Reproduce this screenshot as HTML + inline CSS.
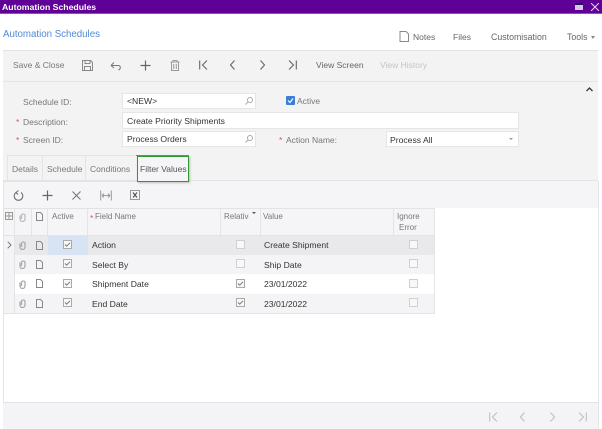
<!DOCTYPE html>
<html><head><meta charset="utf-8">
<style>
html,body{margin:0;padding:0;background:#fff}
#p{position:relative;width:602px;height:429px;overflow:hidden;background:#fff;font-family:"Liberation Sans",sans-serif;font-size:8.5px;color:#555;filter:blur(.3px)}
#p div,#p span,#p svg{position:absolute}
.t{white-space:nowrap;line-height:12px}
.b{background:#fff;border:1px solid #e6e6e6;box-sizing:border-box}
.v{color:#333;font-size:8.6px}
.r{color:#d9534f}
svg{fill:none;stroke:#666;stroke-width:1}
.h{background:#e4e4e6}
</style></head><body><div id="p">
<div style="left:0;top:0;width:602px;height:14px;background:#5f0097;border-bottom:1px solid #8d52b5;box-sizing:border-box"></div>
<span class="t" style="left:2px;top:1px;color:#fff;font-weight:bold;font-size:8.7px">Automation Schedules</span>
<div style="left:575px;top:3px;width:8px;height:7px;background:#d8c4e6;border-top:2px solid #2a1450;box-sizing:border-box"></div>
<svg style="left:591px;top:3px;stroke:#e6d8f0" width="8" height="8"><path d="M0 0L8 8M8 0L0 8"/></svg>

<span class="t" style="left:3px;top:29px;color:#4f8ad8;font-size:9.7px">Automation Schedules</span>
<svg style="left:399px;top:31px" width="10" height="11"><path d="M1 .5H7L9.500 3V10.500H1Z" stroke="#888"/></svg>
<span class="t" style="left:413px;top:31px;color:#666">Notes</span>
<span class="t" style="left:453px;top:31px;color:#666">Files</span>
<span class="t" style="left:491px;top:31px;color:#666;font-size:8.8px">Customisation</span>
<span class="t" style="left:567px;top:31px;color:#666;font-size:8.8px">Tools</span>
<div style="left:591px;top:36px;border-left:2.500px solid transparent;border-right:2.500px solid transparent;border-top:3px solid #888"></div>

<div style="left:3px;top:50px;width:595px;height:31px;background:#f3f3f3;border-top:1px solid #e3e3e3;box-sizing:border-box"></div>
<span class="t" style="left:13px;top:59px;color:#777">Save &amp; Close</span>
<svg style="left:82px;top:60px;stroke:#888" width="11" height="11"><path d="M.5 .5H8.500L10.500 2.500V10.500H.5ZM3 .5V3.500H8V.5M2.500 10.500V6.500H8.500V10.500"/></svg>
<svg style="left:110px;top:60px;stroke:#777" width="12" height="11"><path d="M1 5.500L4 2.500M1 5.500L4 8M1 5.500H8C11 5.500 11 9 8.500 10"/></svg>
<svg style="left:140px;top:60px" width="11" height="11"><path d="M5.500 .5V10.500M.5 5.500H10.500" stroke-width="1.200"/></svg>
<svg style="left:170px;top:60px;stroke:#999" width="10" height="11"><path d="M.5 2H9.500M3 2V.5H7V2M1.500 2V10.500H8.500V2M3.700 4V9M6.300 4V9"/></svg>
<svg style="left:199px;top:60px" width="10" height="10"><path d="M.7 .5V9.500M8 .5L3.500 5L8 9.500" stroke-width="1.100"/></svg>
<svg style="left:229px;top:60px" width="7" height="10"><path d="M5.500 .5L1.500 5L5.500 9.500" stroke-width="1.100"/></svg>
<svg style="left:259px;top:60px" width="7" height="10"><path d="M1.500 .5L5.500 5L1.500 9.500" stroke-width="1.100"/></svg>
<svg style="left:287px;top:60px" width="10" height="10"><path d="M9.300 .5V9.500M2 .5L6.500 5L2 9.500" stroke-width="1.100"/></svg>
<span class="t" style="left:316px;top:59px;color:#666">View Screen</span>
<span class="t" style="left:380px;top:59px;color:#c4c4c4">View History</span>

<div style="left:3px;top:81px;width:595px;height:100px;background:#f3f3f3;border-top:1px solid #e6e6e6;border-bottom:1px solid #e3e3e3;box-sizing:border-box"></div>
<svg style="left:586px;top:87px;stroke:#333" width="7" height="5"><path d="M.5 4L3.500 1L6.500 4" stroke-width="1.300"/></svg>

<span class="t" style="left:23px;top:96px;color:#777">Schedule ID:</span>
<div class="b" style="left:122px;top:93px;width:134px;height:16px"></div>
<span class="t v" style="left:127px;top:95px">&lt;NEW&gt;</span>
<svg style="left:245px;top:97px;stroke:#aaa" width="8" height="8"><circle cx="5" cy="3" r="2.500"/><path d="M3 5L.5 7.500"/></svg>
<div style="left:286px;top:96px;width:9px;height:9px;background:#3a7fd5;border-radius:1px"></div>
<svg style="left:287px;top:97px;stroke:#fff" width="7" height="7"><path d="M1 3.500L3 5.500L6 1.500" stroke-width="1.200"/></svg>
<span class="t" style="left:297px;top:95px;color:#777">Active</span>

<span class="t r" style="left:16px;top:116px">*</span>
<span class="t" style="left:23px;top:116px;color:#777">Description:</span>
<div class="b" style="left:122px;top:112px;width:397px;height:17px"></div>
<span class="t v" style="left:127px;top:115px">Create Priority Shipments</span>

<span class="t r" style="left:16px;top:134px">*</span>
<span class="t" style="left:23px;top:134px;color:#777">Screen ID:</span>
<div class="b" style="left:122px;top:131px;width:134px;height:16px"></div>
<span class="t v" style="left:127px;top:133px">Process Orders</span>
<svg style="left:245px;top:135px;stroke:#aaa" width="8" height="8"><circle cx="5" cy="3" r="2.500"/><path d="M3 5L.5 7.500"/></svg>
<span class="t r" style="left:279px;top:134px">*</span>
<span class="t" style="left:286px;top:134px;color:#777">Action Name:</span>
<div class="b" style="left:386px;top:131px;width:133px;height:16px"></div>
<span class="t v" style="left:390px;top:134px">Process All</span>
<div style="left:509px;top:138px;border-left:2px solid transparent;border-right:2px solid transparent;border-top:2.500px solid #999"></div>

<div class="h" style="left:7px;top:155px;width:1px;height:26px"></div>
<div class="h" style="left:42px;top:155px;width:1px;height:26px"></div>
<div class="h" style="left:85px;top:155px;width:1px;height:26px"></div>
<div class="h" style="left:7px;top:155px;width:130px;height:1px"></div>
<span class="t" style="left:12px;top:163px;color:#777">Details</span>
<span class="t" style="left:47px;top:163px;color:#777">Schedule</span>
<span class="t" style="left:90px;top:163px;color:#777">Conditions</span>

<div style="left:3px;top:181px;width:595px;height:27px;background:#f5f5f7"></div>
<div style="left:3px;top:181px;width:134px;height:1px;background:#e3e3e3"></div>
<div style="left:136px;top:155px;width:53px;height:1px;background:#4a7fd8"></div>
<div style="left:137px;top:156px;width:52px;height:26px;background:#f5f5f7;border:1px solid #2e9a34;box-sizing:border-box;box-shadow:1px 1px 2px #bbb"></div>
<span class="t" style="left:140px;top:163px;color:#555">Filter Values</span>
<svg style="left:13px;top:190px;stroke:#666" width="11" height="11"><path d="M3 2.500A4.300 4.300 0 1 0 8 2.500M5.500 .5L3 2.500L5 4.500"/></svg>
<svg style="left:42px;top:190px" width="11" height="11"><path d="M5.500 .5V10.500M.5 5.500H10.500" stroke-width="1.200"/></svg>
<svg style="left:72px;top:191px;stroke:#777" width="9" height="9"><path d="M.5 .5L8.500 8.500M8.500 .5L.5 8.500" stroke-width="1.100"/></svg>
<svg style="left:100px;top:190px;stroke:#999" width="12" height="11"><path d="M.7 .5V10.500M11.300 .5V10.500M2 5.500H10M2 5.500L4 3.500M2 5.500L4 7.500M10 5.500L8 3.500M10 5.500L8 7.500"/></svg>
<svg style="left:130px;top:190px" width="10" height="10"><rect x=".5" y=".5" width="9" height="9" stroke="#999"/><path d="M3 2.500L7 7.500M7 2.500L3 7.500" stroke="#555" stroke-width="1.200"/></svg>

<div style="left:3px;top:208px;width:431px;height:27px;background:#f5f5f7;border-top:1px solid #e3e3e3;box-sizing:border-box"></div>
<div style="left:3px;top:235px;width:431px;height:20px;background:#e9e9ec"></div>
<div style="left:3px;top:255px;width:431px;height:19px;background:#f4f4f6"></div>
<div style="left:3px;top:294px;width:431px;height:19px;background:#f4f4f6"></div>
<div style="left:3px;top:235px;width:11px;height:78px;background:#f4f4f6"></div>
<div style="left:48px;top:235px;width:40px;height:20px;background:#d8e4f4"></div>
<div class="h" style="left:3px;top:313px;width:431px;height:1px"></div>
<div class="h" style="left:3px;top:235px;width:431px;height:1px"></div>
<div class="h" style="left:14px;top:208px;width:1px;height:105px"></div>
<div class="h" style="left:31px;top:208px;width:1px;height:27px"></div>
<div class="h" style="left:47px;top:208px;width:1px;height:27px"></div>
<div class="h" style="left:87px;top:208px;width:1px;height:27px"></div>
<div class="h" style="left:220px;top:208px;width:1px;height:27px"></div>
<div class="h" style="left:260px;top:208px;width:1px;height:27px"></div>
<div class="h" style="left:393px;top:208px;width:1px;height:27px"></div>
<div class="h" style="left:434px;top:208px;width:1px;height:106px"></div>

<svg style="left:5px;top:212px;stroke:#999" width="8" height="8"><rect x=".5" y=".5" width="7" height="7"/><path d="M.5 4H7.500M4 .5V7.500"/></svg>
<svg style="left:19px;top:212px;stroke:#bbb" width="7" height="10"><path d="M1 3.500V7A2.500 2.500 0 0 0 6 7V3A2 2 0 0 0 2.500 3V7" stroke-width="1.300"/></svg>
<svg style="left:36px;top:212px;stroke:#888" width="7" height="9"><path d="M.5 .5H4.500L6.500 2.500V8.500H.5Z"/></svg>
<span class="t" style="left:52px;top:211px;color:#777;font-size:8px">Active</span>
<span class="t r" style="left:90px;top:212px">*</span>
<span class="t" style="left:95px;top:211px;color:#777;font-size:8px">Field Name</span>
<span class="t" style="left:224px;top:211px;color:#777;font-size:8px;width:25px;overflow:hidden">Relative</span>
<div style="left:252px;top:212px;border-left:2px solid transparent;border-right:2px solid transparent;border-top:2.500px solid #555"></div>
<span class="t" style="left:263px;top:211px;color:#777;font-size:8px">Value</span>
<span class="t" style="left:397px;top:211px;color:#777;font-size:8px">Ignore</span>
<span class="t" style="left:399px;top:222px;color:#777;font-size:8px">Error</span>

<svg style="left:7px;top:241px;stroke:#777" width="5" height="8"><path d="M.7 .7L4 4L.7 7.300"/></svg>

<svg style="left:19px;top:240px;stroke:#aaa" width="7" height="10"><path d="M1 3.500V7A2.500 2.500 0 0 0 6 7V3A2 2 0 0 0 2.500 3V7" stroke-width="1.300"/></svg>
<svg style="left:19px;top:259px;stroke:#aaa" width="7" height="10"><path d="M1 3.500V7A2.500 2.500 0 0 0 6 7V3A2 2 0 0 0 2.500 3V7" stroke-width="1.300"/></svg>
<svg style="left:19px;top:279px;stroke:#aaa" width="7" height="10"><path d="M1 3.500V7A2.500 2.500 0 0 0 6 7V3A2 2 0 0 0 2.500 3V7" stroke-width="1.300"/></svg>
<svg style="left:19px;top:298px;stroke:#aaa" width="7" height="10"><path d="M1 3.500V7A2.500 2.500 0 0 0 6 7V3A2 2 0 0 0 2.500 3V7" stroke-width="1.300"/></svg>

<svg style="left:36px;top:241px;stroke:#888" width="7" height="9"><path d="M.5 .5H4.500L6.500 2.500V8.500H.5Z"/></svg>
<svg style="left:36px;top:260px;stroke:#888" width="7" height="9"><path d="M.5 .5H4.500L6.500 2.500V8.500H.5Z"/></svg>
<svg style="left:36px;top:279px;stroke:#888" width="7" height="9"><path d="M.5 .5H4.500L6.500 2.500V8.500H.5Z"/></svg>
<svg style="left:36px;top:299px;stroke:#888" width="7" height="9"><path d="M.5 .5H4.500L6.500 2.500V8.500H.5Z"/></svg>

<svg style="left:63px;top:240px;stroke:#aaa" width="9" height="9"><rect x=".5" y=".5" width="8" height="8" fill="#f8f8f8"/><path d="M2 4.500L3.700 6.200L7 2.800" stroke="#777"/></svg>
<svg style="left:63px;top:259px;stroke:#aaa" width="9" height="9"><rect x=".5" y=".5" width="8" height="8" fill="#f8f8f8"/><path d="M2 4.500L3.700 6.200L7 2.800" stroke="#777"/></svg>
<svg style="left:63px;top:279px;stroke:#aaa" width="9" height="9"><rect x=".5" y=".5" width="8" height="8" fill="#f8f8f8"/><path d="M2 4.500L3.700 6.200L7 2.800" stroke="#777"/></svg>
<svg style="left:63px;top:298px;stroke:#aaa" width="9" height="9"><rect x=".5" y=".5" width="8" height="8" fill="#f8f8f8"/><path d="M2 4.500L3.700 6.200L7 2.800" stroke="#777"/></svg>

<span class="t v" style="left:92px;top:239px">Action</span>
<span class="t v" style="left:92px;top:259px">Select By</span>
<span class="t v" style="left:92px;top:278px">Shipment Date</span>
<span class="t v" style="left:92px;top:298px">End Date</span>

<svg style="left:236px;top:240px;stroke:#d0d0d0" width="9" height="9"><rect x=".5" y=".5" width="8" height="8" fill="#f8f8f8"/></svg>
<svg style="left:236px;top:259px;stroke:#d0d0d0" width="9" height="9"><rect x=".5" y=".5" width="8" height="8" fill="#f8f8f8"/></svg>
<svg style="left:236px;top:279px;stroke:#aaa" width="9" height="9"><rect x=".5" y=".5" width="8" height="8" fill="#f8f8f8"/><path d="M2 4.500L3.700 6.200L7 2.800" stroke="#777"/></svg>
<svg style="left:236px;top:298px;stroke:#aaa" width="9" height="9"><rect x=".5" y=".5" width="8" height="8" fill="#f8f8f8"/><path d="M2 4.500L3.700 6.200L7 2.800" stroke="#777"/></svg>

<span class="t v" style="left:264px;top:239px">Create Shipment</span>
<span class="t v" style="left:264px;top:259px">Ship Date</span>
<span class="t v" style="left:264px;top:278px">23/01/2022</span>
<span class="t v" style="left:264px;top:298px">23/01/2022</span>

<svg style="left:409px;top:240px;stroke:#d0d0d0" width="9" height="9"><rect x=".5" y=".5" width="8" height="8" fill="#f8f8f8"/></svg>
<svg style="left:409px;top:259px;stroke:#d0d0d0" width="9" height="9"><rect x=".5" y=".5" width="8" height="8" fill="#f8f8f8"/></svg>
<svg style="left:409px;top:279px;stroke:#d0d0d0" width="9" height="9"><rect x=".5" y=".5" width="8" height="8" fill="#f8f8f8"/></svg>
<svg style="left:409px;top:298px;stroke:#d0d0d0" width="9" height="9"><rect x=".5" y=".5" width="8" height="8" fill="#f8f8f8"/></svg>

<div class="h" style="left:3px;top:181px;width:1px;height:248px"></div>
<div class="h" style="left:598px;top:181px;width:1px;height:248px"></div>
<div style="left:3px;top:402px;width:595px;height:27px;background:#f4f4f6;border-top:1px solid #e3e3e3;box-sizing:border-box"></div>
<svg style="left:489px;top:412px;stroke:#c0c0c0" width="10" height="10"><path d="M.7 .5V9.500M8 .5L3.500 5L8 9.500" stroke-width="1.100"/></svg>
<svg style="left:519px;top:412px;stroke:#c0c0c0" width="7" height="10"><path d="M5.500 .5L1.500 5L5.500 9.500" stroke-width="1.100"/></svg>
<svg style="left:549px;top:412px;stroke:#c0c0c0" width="7" height="10"><path d="M1.500 .5L5.500 5L1.500 9.500" stroke-width="1.100"/></svg>
<svg style="left:577px;top:412px;stroke:#c0c0c0" width="10" height="10"><path d="M9.300 .5V9.500M2 .5L6.500 5L2 9.500" stroke-width="1.100"/></svg>
</div></body></html>
